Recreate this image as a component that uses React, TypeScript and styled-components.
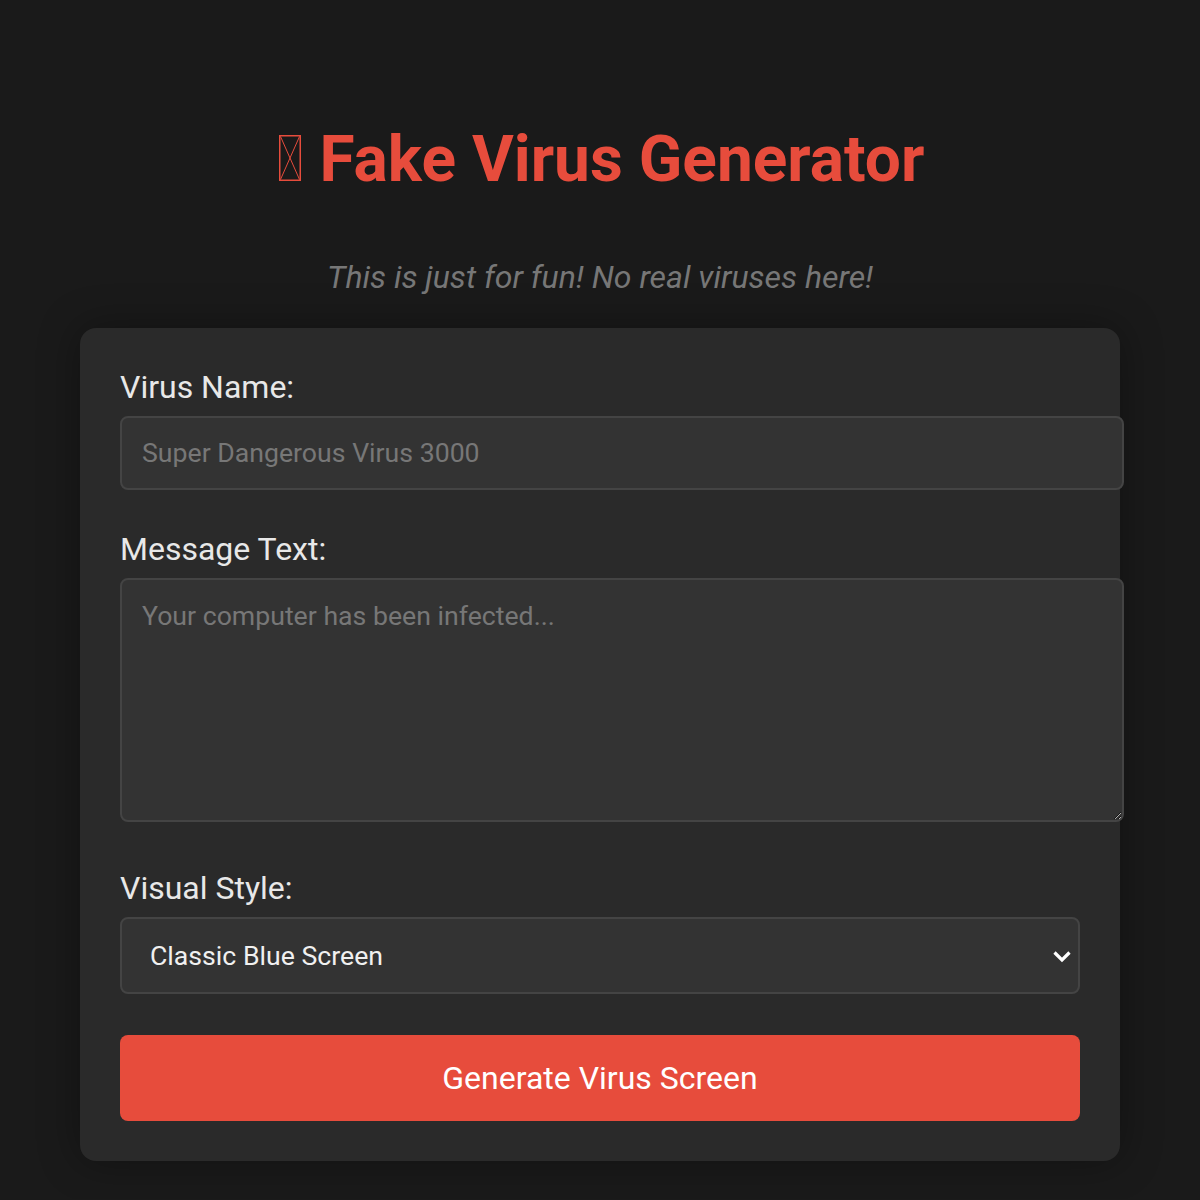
import React, { useState } from "react";
import styled, { createGlobalStyle } from "styled-components";

const GlobalStyle = createGlobalStyle`
  html, body {
    margin: 0;
    padding: 0;
    background: #1a1a1a;
    color: #e0e0e0;
    font-family: Roboto, "Liberation Sans", sans-serif;
  }
`;

// the icon in front of the title shows up as a missing-glyph box
function MissingGlyph() {
  return (
    <Tofu viewBox="0 0 22 46" aria-label="🦠" role="img">
      <rect x="0.75" y="0.75" width="20.5" height="44.5" fill="none" stroke="#e74c3c" strokeWidth="1.5" />
      <path d="M1.5 1.5 L20.5 44.5 M20.5 1.5 L1.5 44.5" stroke="#e74c3c" strokeWidth="1" fill="none" />
    </Tofu>
  );
}

function ChevronIcon() {
  return (
    <Chevron viewBox="0 0 20 14">
      <path d="M2.5 2.5 L10 10 L17.5 2.5" fill="none" stroke="#ffffff" strokeWidth="3.2" />
    </Chevron>
  );
}

export default function App() {
  const [name, setName] = useState("");
  const [message, setMessage] = useState("");
  const [style, setStyle] = useState("bsod");

  return (
    <>
      <GlobalStyle />
      <Page>
        <Title>
          <MissingGlyph /> Fake Virus Generator
        </Title>
        <Subtitle>This is just for fun! No real viruses here!</Subtitle>
        <Card>
          <Group>
            <Label htmlFor="virus-name">Virus Name:</Label>
            <TextInput
              id="virus-name"
              type="text"
              placeholder="Super Dangerous Virus 3000"
              value={name}
              onChange={(e) => setName(e.target.value)}
            />
          </Group>
          <Group $extra={7}>
            <Label htmlFor="message">Message Text:</Label>
            <TextArea
              id="message"
              placeholder="Your computer has been infected..."
              value={message}
              onChange={(e) => setMessage(e.target.value)}
            />
          </Group>
          <Group $extra={1}>
            <Label htmlFor="visual-style">Visual Style:</Label>
            <SelectWrap>
              <Select
                id="visual-style"
                value={style}
                onChange={(e) => setStyle(e.target.value)}
              >
                <option value="bsod">Classic Blue Screen</option>
                <option value="matrix">Matrix Hacker</option>
                <option value="retro">Retro Terminal</option>
              </Select>
              <ChevronIcon />
            </SelectWrap>
          </Group>
          <GenerateButton type="button">Generate Virus Screen</GenerateButton>
        </Card>
      </Page>
    </>
  );
}

const Page = styled.div`
  padding: 122px 80px 38px;
  display: flex;
  flex-direction: column;
  align-items: center;
`;

const Title = styled.h1`
  margin: 0 0 61px;
  font-size: 64px;
  font-weight: 700;
  color: #e74c3c;
  text-align: center;
`;

const Tofu = styled.svg`
  display: inline-block;
  width: 22px;
  height: 46px;
  margin: 0 3px;
  vertical-align: baseline;
`;

const Subtitle = styled.p`
  margin: 0 0 32px;
  font-size: 32px;
  font-style: italic;
  color: #777777;
  text-align: center;
`;

const Card = styled.div`
  width: 960px;
  padding: 40px;
  background: #2a2a2a;
  border-radius: 16px;
  box-shadow: 0 0 40px rgba(0, 0, 0, 0.35);
`;

const Group = styled.div<{ $extra?: number }>`
  margin-bottom: ${({ $extra }) => 40 + ($extra || 0)}px;
`;

const Label = styled.label`
  display: block;
  margin-bottom: 10px;
  font-size: 32px;
  color: #e8e8e8;
`;

const fieldBase = `
  display: block;
  width: 100%;
  padding: 19px 20px;
  background: #333333;
  border: 2px solid #444444;
  border-radius: 8px;
  color: #e0e0e0;
  font-family: Roboto, "Liberation Sans", sans-serif;
  font-size: 26.67px;
  outline: none;
  &::placeholder {
    color: #777777;
  }
`;

const TextInput = styled.input`
  ${fieldBase}
`;

const TextArea = styled.textarea`
  ${fieldBase}
  padding: 20px;
  height: 200px;
  resize: vertical;
  color-scheme: dark;
`;

const SelectWrap = styled.div`
  position: relative;
`;

const Select = styled.select`
  ${fieldBase}
  box-sizing: border-box;
  height: 77px;
  padding: 0 48px 0 28px;
  appearance: none;
  -webkit-appearance: none;
  color: #f0f0f0;
`;

const Chevron = styled.svg`
  position: absolute;
  right: 8px;
  top: 50%;
  width: 20px;
  height: 14px;
  margin-top: -6px;
  pointer-events: none;
`;

const GenerateButton = styled.button`
  display: block;
  width: 100%;
  padding: 24px;
  border: none;
  border-radius: 8px;
  background: #e74c3c;
  color: #ffffff;
  font-family: Roboto, "Liberation Sans", sans-serif;
  font-size: 32px;
  cursor: pointer;
`;
